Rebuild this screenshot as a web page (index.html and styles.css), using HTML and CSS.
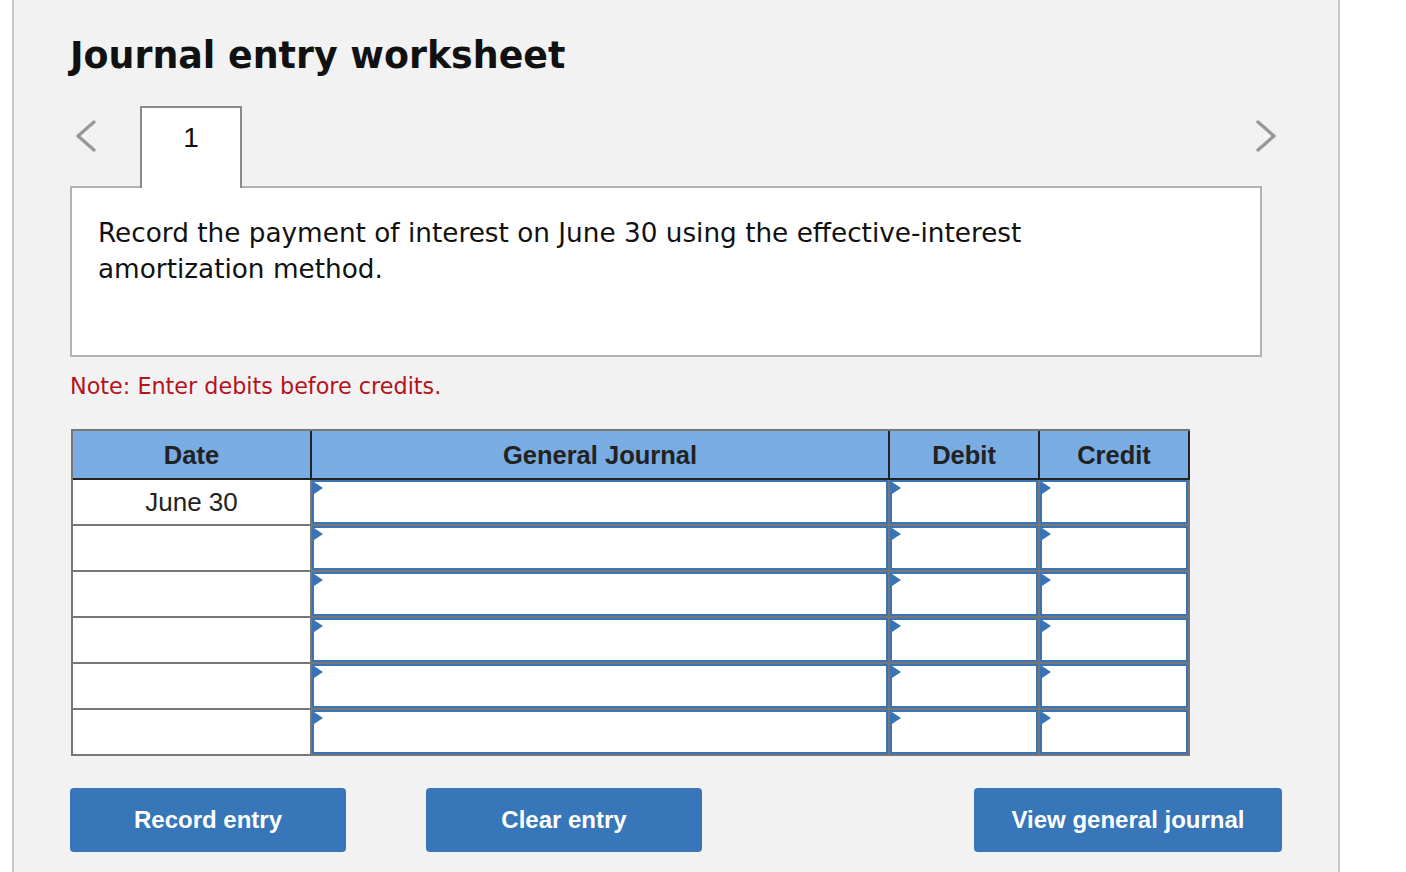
FILE: index.html
```html
<!DOCTYPE html>
<html lang="en">
<head>
<meta charset="utf-8">
<title>Journal entry worksheet</title>
<link rel="stylesheet" href="styles.css">
</head>
<body>
<div class="panel">
  <h1 class="title">Journal entry worksheet</h1>

  <div class="nav">
    <span class="arrow arrow-left">
      <svg width="24" height="34" viewBox="0 0 24 34"><polyline points="19,3 3,17 19,31" fill="none" stroke="#999" stroke-width="3.4" stroke-linecap="round" stroke-linejoin="round"/></svg>
    </span>
    <div class="tab">1</div>
    <span class="nav-spacer"></span>
    <span class="arrow arrow-right">
      <svg width="24" height="34" viewBox="0 0 24 34"><polyline points="5,3 21,17 5,31" fill="none" stroke="#999" stroke-width="3.4" stroke-linecap="round" stroke-linejoin="round"/></svg>
    </span>
  </div>

  <div class="prompt">
    <p>Record the payment of interest on June 30 using the effective-interest amortization method.</p>
  </div>

  <p class="note">Note: Enter debits before credits.</p>

  <div class="journal">
    <div class="jhead">
      <div class="hcell">Date</div>
      <div class="hcell">General Journal</div>
      <div class="hcell">Debit</div>
      <div class="hcell">Credit</div>
    </div>
    <div class="jbody">
      <div class="dcell">June 30</div>
      <div class="icell"><span class="tri"></span></div>
      <div class="icell"><span class="tri"></span></div>
      <div class="icell"><span class="tri"></span></div>

      <div class="dcell"></div>
      <div class="icell"><span class="tri"></span></div>
      <div class="icell"><span class="tri"></span></div>
      <div class="icell"><span class="tri"></span></div>

      <div class="dcell"></div>
      <div class="icell"><span class="tri"></span></div>
      <div class="icell"><span class="tri"></span></div>
      <div class="icell"><span class="tri"></span></div>

      <div class="dcell"></div>
      <div class="icell"><span class="tri"></span></div>
      <div class="icell"><span class="tri"></span></div>
      <div class="icell"><span class="tri"></span></div>

      <div class="dcell"></div>
      <div class="icell"><span class="tri"></span></div>
      <div class="icell"><span class="tri"></span></div>
      <div class="icell"><span class="tri"></span></div>

      <div class="dcell"></div>
      <div class="icell"><span class="tri"></span></div>
      <div class="icell"><span class="tri"></span></div>
      <div class="icell"><span class="tri"></span></div>
    </div>
  </div>

  <div class="actions">
    <button class="btn" type="button">Record entry</button>
    <button class="btn" type="button">Clear entry</button>
    <button class="btn btn-right" type="button">View general journal</button>
  </div>
</div>
</body>
</html>
```

FILE: styles.css
```css
html, body {
  margin: 0;
  padding: 0;
  background: #ffffff;
}

body {
  font-family: "DejaVu Sans", Verdana, sans-serif;
  color: #111;
  overflow: hidden;
}

.panel {
  box-sizing: border-box;
  margin-left: 12px;
  width: 1328px;
  min-height: 872px;
  background: #f2f2f2;
  border-left: 2px solid #c6c6c6;
  border-right: 2px solid #c6c6c6;
  padding: 34px 56px 0 56px;
}

.title {
  margin: 0;
  font-family: "DejaVu Sans", Verdana, sans-serif;
  font-weight: bold;
  font-size: 36.4px;
  line-height: 43px;
  color: #111;
}

.nav {
  display: flex;
  align-items: flex-start;
  margin-top: 29px;
  height: 80px;
}

.arrow {
  display: flex;
  height: 34px;
  margin-top: 13px;
}

.arrow-left {
  width: 70px;
  padding-left: 5px;
  box-sizing: border-box;
}

.arrow-right {
  margin-right: 5px;
}

.nav-spacer {
  flex: 1;
}

.tab {
  position: relative;
  z-index: 1;
  box-sizing: border-box;
  width: 102px;
  height: 82px;
  background: #fff;
  border: 2px solid #8a8a8a;
  border-bottom: 0;
  text-align: center;
  font-family: "Liberation Sans", Arial, sans-serif;
  font-size: 28px;
  line-height: 32px;
  padding-top: 14px;
  color: #111;
}

.prompt {
  box-sizing: border-box;
  width: 1192px;
  height: 171px;
  background: #fff;
  border: 2px solid #b2b2b2;
  padding: 27px 26px 0 26px;
}

.prompt p {
  margin: 0;
  max-width: 1050px;
  font-size: 26.3px;
  line-height: 36px;
  color: #111;
}

.note {
  margin: 16px 0 0 0;
  font-size: 22.3px;
  line-height: 26px;
  color: #b5121b;
}

.journal {
  box-sizing: border-box;
  width: 1119px;
  margin: 30px 0 0 1px;
  background: #777;
  padding: 2px;
}

.jhead {
  display: grid;
  grid-template-columns: 237px 576px 148px 148px;
  column-gap: 2px;
  background: #222;
  border-bottom: 2px solid #222;
  margin-right: -2px;
  border-right: 2px solid #222;
}

.hcell {
  height: 47px;
  padding-top: 2px;
  box-sizing: border-box;
  background: #78ace2;
  display: flex;
  align-items: center;
  justify-content: center;
  font-family: "Liberation Sans", Arial, sans-serif;
  font-weight: bold;
  font-size: 25.5px;
  color: #222;
}

.jbody {
  display: grid;
  grid-template-columns: 237px 576px 148px 148px;
  grid-auto-rows: 44px;
  gap: 2px;
}

.dcell {
  background: #fff;
  display: flex;
  align-items: center;
  justify-content: center;
  font-family: "Liberation Sans", Arial, sans-serif;
  font-size: 26px;
  color: #222;
}

.icell {
  position: relative;
  box-sizing: border-box;
  background: #fff;
  border: 2px solid #3a73b6;
}

.tri {
  position: absolute;
  left: 0;
  top: 0;
  width: 0;
  height: 0;
  border-left: 9px solid #3a73b6;
  border-top: 6px solid transparent;
  border-bottom: 6px solid transparent;
}

.actions {
  display: flex;
  gap: 80px;
  margin-top: 32px;
}

.btn {
  box-sizing: border-box;
  min-width: 276px;
  height: 64px;
  padding: 0 37px;
  border: 0;
  border-radius: 4px;
  background: #3776b8;
  color: #fff;
  font-family: "Liberation Sans", Arial, sans-serif;
  font-weight: bold;
  font-size: 24px;
  cursor: pointer;
}

.btn-right {
  margin-left: auto;
  min-width: 308px;
  padding: 0 20px;
}
```
